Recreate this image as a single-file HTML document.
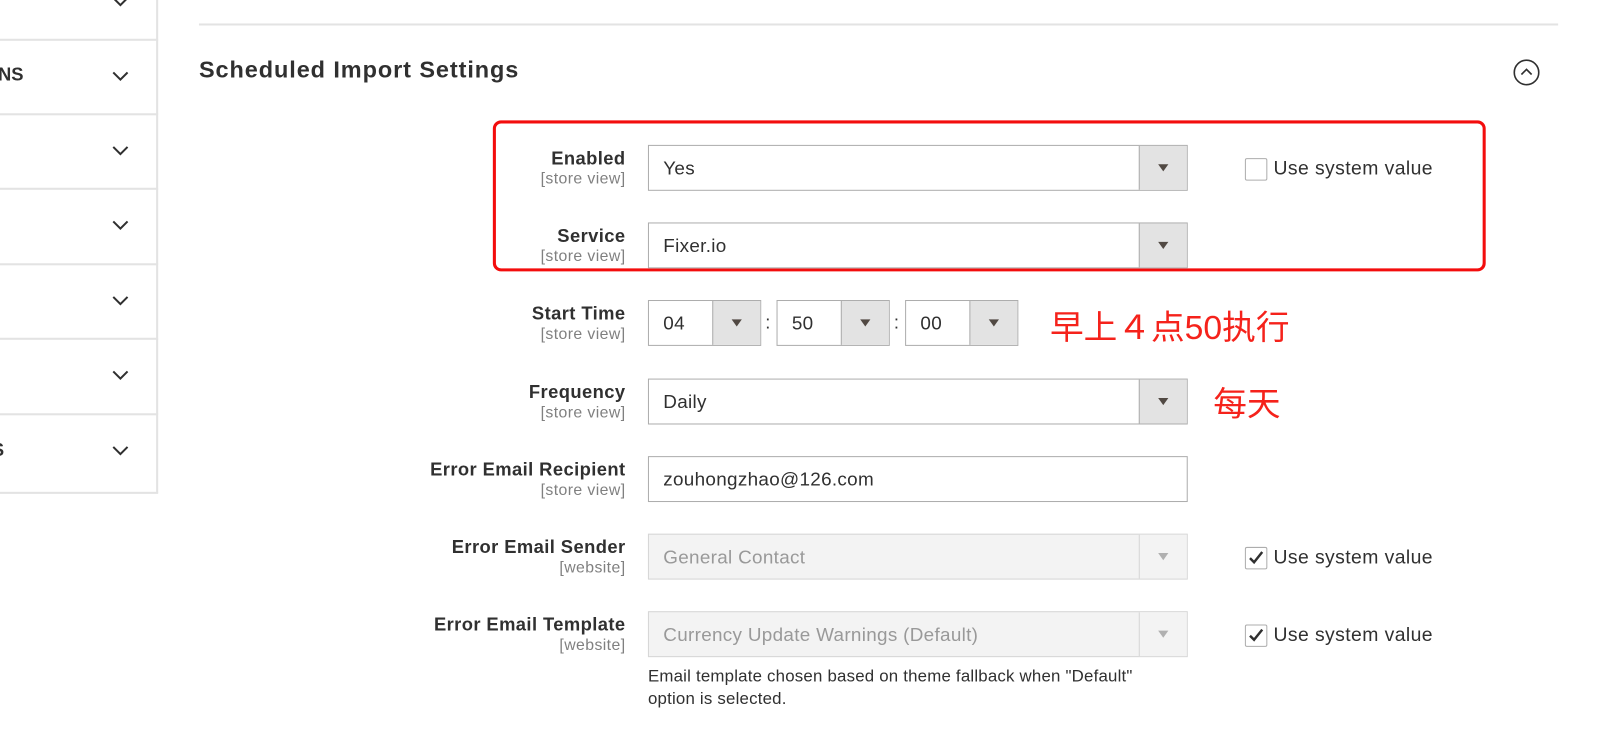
<!DOCTYPE html>
<html><head><meta charset="utf-8"><style>
*{box-sizing:border-box;margin:0;padding:0}
body{width:1600px;height:755px;background:#fff;position:relative;overflow:hidden;font-family:"Liberation Sans","Noto Sans CJK SC",sans-serif;color:#303030}
#w{position:absolute;left:0;top:0;width:1568px;height:740px;transform:scale(1.0204);transform-origin:0 0}
.a{position:absolute}
.hl{position:absolute;left:0;width:155px;height:2px;background:#e3e3e3}
.chev{position:absolute;left:110px;width:16px;height:10px}
.lab{position:absolute;right:955px;text-align:right;font-weight:bold;font-size:18px;letter-spacing:0.4px;color:#303030;white-space:nowrap}
.scope{position:absolute;right:955px;text-align:right;font-size:15.5px;letter-spacing:0.4px;color:#808080;white-space:nowrap}
.sel{position:absolute;height:45px;border:1px solid #adadad;background:#fff;font-size:18.5px;letter-spacing:0.3px;line-height:43px;padding-left:14px;color:#303030}
.sel .btn{position:absolute;right:0;top:0;width:47px;height:43px;background:#e3e3e3;border-left:1px solid #adadad}
.sel .btn:after{content:"";position:absolute;left:18px;top:18px;border-left:5px solid transparent;border-right:5px solid transparent;border-top:7px solid #514943}
.dis{background:#f3f3f3;border-color:#d6d6d6;color:#999}
.dis .btn{background:#f3f3f3;border-left-color:#d6d6d6}
.dis .btn:after{border-top-color:#b0b0b0}
.cb{position:absolute;left:1220px;width:22px;height:22px;border:1px solid #adadad;border-radius:2px;background:#fff}
.cbt{position:absolute;left:1248px;font-size:19px;letter-spacing:0.4px;color:#303030}
.red{position:absolute;color:#f5221b;font-size:33px;font-family:"Liberation Sans","Noto Sans CJK SC",sans-serif}
</style></head><body><div id="w">
<div class="a" style="left:153px;top:0;width:2px;height:483px;background:#e3e3e3"></div>
<div class="hl" style="top:38px"></div>
<div class="hl" style="top:111px"></div>
<div class="hl" style="top:184px"></div>
<div class="hl" style="top:258px"></div>
<div class="hl" style="top:331px"></div>
<div class="hl" style="top:405px"></div>
<div class="hl" style="top:482px"></div>
<svg class="chev" style="top:-3px" viewBox="0 0 16 10"><path d="M1 1l7 7 7-7" fill="none" stroke="#303030" stroke-width="2"/></svg>
<svg class="chev" style="top:70px" viewBox="0 0 16 10"><path d="M1 1l7 7 7-7" fill="none" stroke="#303030" stroke-width="2"/></svg>
<svg class="chev" style="top:143px" viewBox="0 0 16 10"><path d="M1 1l7 7 7-7" fill="none" stroke="#303030" stroke-width="2"/></svg>
<svg class="chev" style="top:216px" viewBox="0 0 16 10"><path d="M1 1l7 7 7-7" fill="none" stroke="#303030" stroke-width="2"/></svg>
<svg class="chev" style="top:290px" viewBox="0 0 16 10"><path d="M1 1l7 7 7-7" fill="none" stroke="#303030" stroke-width="2"/></svg>
<svg class="chev" style="top:363px" viewBox="0 0 16 10"><path d="M1 1l7 7 7-7" fill="none" stroke="#303030" stroke-width="2"/></svg>
<svg class="chev" style="top:437px" viewBox="0 0 16 10"><path d="M1 1l7 7 7-7" fill="none" stroke="#303030" stroke-width="2"/></svg>
<div class="a" style="left:-2px;top:63px;font-weight:bold;font-size:18px">NS</div>
<div class="a" style="left:-8px;top:431px;font-weight:bold;font-size:18px">S</div>

<div class="a" style="left:195px;top:23px;width:1332px;height:2px;background:#e3e3e3"></div>
<div class="a" style="left:195px;top:55px;font-size:23px;font-weight:bold;color:#303030;letter-spacing:0.9px">Scheduled Import Settings</div>
<svg class="a" style="left:1483px;top:58px" width="26" height="26" viewBox="0 0 26 26"><circle cx="13" cy="13" r="12" fill="none" stroke="#303030" stroke-width="1.6"/><path d="M8 15l5-5 5 5" fill="none" stroke="#303030" stroke-width="1.6"/></svg>

<div class="a" style="left:483px;top:118px;width:973px;height:148px;border:3px solid #f30d0d;border-radius:8px"></div>

<div class="lab" style="top:145px">Enabled</div><div class="scope" style="top:167px">[store view]</div>
<div class="sel" style="left:635px;top:142px;width:529px">Yes<div class="btn"></div></div>
<div class="cb" style="top:155px"></div><div class="cbt" style="top:155px">Use system value</div>

<div class="lab" style="top:221px">Service</div><div class="scope" style="top:243px">[store view]</div>
<div class="sel" style="left:635px;top:218px;width:529px">Fixer.io<div class="btn"></div></div>

<div class="lab" style="top:297px">Start Time</div><div class="scope" style="top:319px">[store view]</div>
<div class="sel" style="left:635px;top:294px;width:111px">04<div class="btn"></div></div>
<div class="a" style="left:750px;top:306px;font-size:18px">:</div>
<div class="sel" style="left:761px;top:294px;width:111px">50<div class="btn"></div></div>
<div class="a" style="left:876px;top:306px;font-size:18px">:</div>
<div class="sel" style="left:887px;top:294px;width:111px">00<div class="btn"></div></div>
<div class="red" style="left:1029px;top:294px">早上４点50执行</div>

<div class="lab" style="top:374px">Frequency</div><div class="scope" style="top:396px">[store view]</div>
<div class="sel" style="left:635px;top:371px;width:529px">Daily<div class="btn"></div></div>
<div class="red" style="left:1189px;top:369px">每天</div>

<div class="lab" style="top:450px">Error Email Recipient</div><div class="scope" style="top:472px">[store view]</div>
<div class="sel" style="left:635px;top:447px;width:529px">zouhongzhao@126.com</div>

<div class="lab" style="top:526px">Error Email Sender</div><div class="scope" style="top:548px">[website]</div>
<div class="sel dis" style="left:635px;top:523px;width:529px">General Contact<div class="btn"></div></div>
<div class="cb" style="top:536px"></div><svg class="a" style="left:1223px;top:539px" width="16" height="16" viewBox="0 0 16 16"><path d="M2 8l4 4 8-10" fill="none" stroke="#303030" stroke-width="2.4"/></svg><div class="cbt" style="top:536px">Use system value</div>

<div class="lab" style="top:602px">Error Email Template</div><div class="scope" style="top:624px">[website]</div>
<div class="sel dis" style="left:635px;top:599px;width:529px">Currency Update Warnings (Default)<div class="btn"></div></div>
<div class="cb" style="top:612px"></div><svg class="a" style="left:1223px;top:615px" width="16" height="16" viewBox="0 0 16 16"><path d="M2 8l4 4 8-10" fill="none" stroke="#303030" stroke-width="2.4"/></svg><div class="cbt" style="top:612px">Use system value</div>

<div class="a" style="left:635px;top:652px;font-size:16.5px;letter-spacing:0.2px;line-height:22px;color:#303030;white-space:nowrap">Email template chosen based on theme fallback when "Default"<br>option is selected.</div>
</div></body></html>
